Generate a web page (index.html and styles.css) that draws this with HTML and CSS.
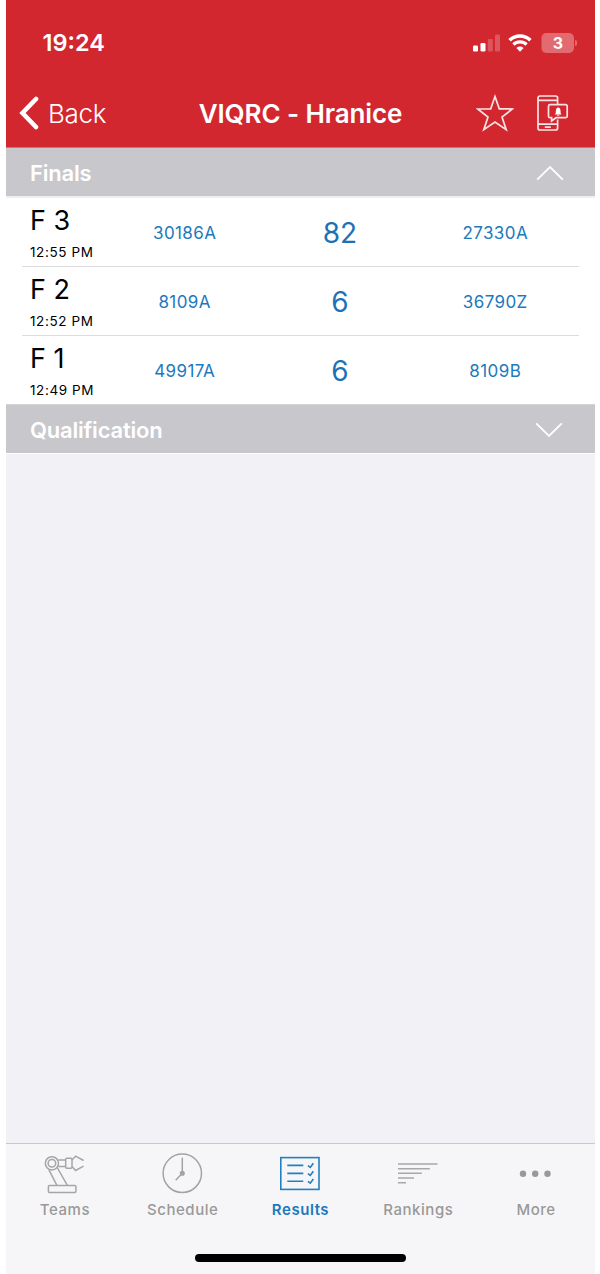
FILE: index.html
```html
<!DOCTYPE html>
<html lang="en">
<head>
  <meta charset="UTF-8">
  <title>VIQRC - Hranice</title>
  <meta name="viewport" content="width=device-width, initial-scale=1.0">
  <link rel="stylesheet" href="styles.css">
</head>
<body>
  <div class="screen">
    <header class="top">
      <div class="status-bar">
        <span class="time">19:24</span>
        <div class="status-icons">
          <svg class="signal" width="28" height="18" viewBox="0 0 28 18" fill="#fff">
            <rect x="0" y="11.5" width="5" height="6" rx="1.3"/>
            <rect x="7.5" y="9" width="5" height="8.5" rx="1.3"/>
            <rect x="14.8" y="5" width="5" height="12.5" rx="1.3" opacity=".22"/>
            <rect x="22" y="0.5" width="5" height="17" rx="1.3" opacity=".22"/>
          </svg>
          <svg class="wifi" width="24" height="18" viewBox="0 0 24 18">
            <path d="M1.600 6.200a14.800 14.800 0 0 1 20.800 0" fill="none" stroke="#fff" stroke-width="3.600"/>
            <path d="M5.400 10.500a9.500 9.500 0 0 1 13.200 0" fill="none" stroke="#fff" stroke-width="3.200"/>
            <path d="M12 17.800L8.400 14a5.200 5.200 0 0 1 7.200 0z" fill="#fff"/>
          </svg>
          <div class="battery">3</div>
          <div class="battery-tip"></div>
        </div>
      </div>
      <nav class="nav-bar">
        <a class="back">
          <svg width="20" height="34" viewBox="0 0 20 34"><path d="M17 3L3.500 17 17 31" fill="none" stroke="#fff" stroke-width="4.600" stroke-linecap="round" stroke-linejoin="miter"/></svg>
          <span class="back-text">Back</span>
        </a>
        <h1 class="title">VIQRC - Hranice</h1>
        <div class="actions">
          <svg width="38" height="38" viewBox="0 0 38 38"><path d="M19 2.500l4.300 12.300 13 .2-10.300 8.100 4.200 12.600L19 28.100 7.800 35.700l4.200-12.600L1.700 15l13-.2z" fill="none" stroke="#fbe3e4" stroke-width="1.700"/></svg>
          <svg class="phone" width="32" height="36" viewBox="0 0 32 36" fill="none" stroke="#fbe3e4" stroke-width="1.700">
            <path d="M20.600 9.500V3a2 2 0 0 0-2-2H3a2 2 0 0 0-2 2v30a2 2 0 0 0 2 2h15.600a2 2 0 0 0 2-2V24.500"/>
            <path d="M1 5.300h19.600M1 29.200h19.600M7.800 32.200h6"/>
            <path d="M13 9.700h15.700a1.500 1.500 0 0 1 1.500 1.500v10a1.500 1.500 0 0 1-1.500 1.500H19L14.600 26v-3.300H13a1.500 1.500 0 0 1-1.500-1.500v-10A1.500 1.500 0 0 1 13 9.700z"/>
            <path d="M17.600 19.600c1.200-1 1.200-1.800 1.200-3.200 0-2.200 1-3.800 2.400-3.800s2.400 1.600 2.400 3.800c0 1.400 0 2.200 1.200 3.200z" fill="#fff" stroke="none"/>
            <path d="M20 20.200h2.400" stroke-width="1"/>
          </svg>
        </div>
      </nav>
    </header>

    <main class="content">
      <div class="section">
        <span>Finals</span>
        <svg width="28" height="16" viewBox="0 0 28 16"><path d="M1.200 14.600L14 2l12.800 12.600" fill="none" stroke="#fff" stroke-width="1.800"/></svg>
      </div>
      <div class="matches">
        <div class="match">
          <div class="info"><span class="name">F 3</span><span class="hour">12:55 PM</span></div>
          <span class="team">30186A</span><span class="score">82</span><span class="team">27330A</span>
        </div>
        <div class="match">
          <div class="info"><span class="name">F 2</span><span class="hour">12:52 PM</span></div>
          <span class="team">8109A</span><span class="score">6</span><span class="team">36790Z</span>
        </div>
        <div class="match">
          <div class="info"><span class="name">F 1</span><span class="hour">12:49 PM</span></div>
          <span class="team">49917A</span><span class="score">6</span><span class="team">8109B</span>
        </div>
      </div>
      <div class="section closed">
        <span>Qualification</span>
        <svg width="28" height="16" viewBox="0 0 28 16"><path d="M1.200 1.400L14 14 26.800 1.400" fill="none" stroke="#fff" stroke-width="1.800"/></svg>
      </div>
    </main>

    <footer class="bottom">
      <nav class="tabs">
        <a class="tab">
          <svg width="42" height="42" viewBox="0 0 42 42" fill="none" stroke="#a6a6a6" stroke-width="1.500">
            <circle cx="7.900" cy="11.300" r="6.600"/>
            <circle cx="7.900" cy="11.300" r="3.800"/>
            <path d="M14.200 8.100h7.500M14.200 14.500h7.500"/>
            <rect x="21.700" y="6.300" width="6.300" height="10" rx="1"/>
            <path d="M28 8.100l3.600-4 8 4.400M28 14.500l3.600 4 8-4.400"/>
            <path d="M4.700 17.300L13 33.600M13.200 15.500l10.300 18.100"/>
            <rect x="4.400" y="33.600" width="27.500" height="7" rx="1"/>
          </svg>
          <span>Teams</span>
        </a>
        <a class="tab">
          <svg width="42" height="42" viewBox="0 0 42 42" fill="none" stroke="#a3a3a3" stroke-width="1.500">
            <circle cx="20.300" cy="21.300" r="19.200"/>
            <path d="M20.300 5.800v15.500l-6.600 7"/>
            <circle cx="20.300" cy="21.300" r="1.800" fill="#a3a3a3"/>
          </svg>
          <span>Schedule</span>
        </a>
        <a class="tab active">
          <svg width="42" height="42" viewBox="0 0 42 42" fill="none" stroke="#2380bf" stroke-width="1.600">
            <rect x="1.800" y="5.600" width="38.200" height="31.800"/>
            <path d="M8.300 13.400h16M8.300 21.400h16M8.300 29.200h16"/>
            <path d="M28.900 13.600l2.400 1.800 3-4.200M28.900 21.600l2.400 1.800 3-4.200M28.900 29.400l2.400 1.800 3-4.200"/>
          </svg>
          <span>Results</span>
        </a>
        <a class="tab">
          <svg width="42" height="42" viewBox="0 0 42 42" stroke="#a8a8a8" stroke-width="1.600">
            <path d="M1 12h39.500M1 16.700h31.800M1 21.300h23.800M1 26h16M1 30.700h8"/>
          </svg>
          <span>Rankings</span>
        </a>
        <a class="tab">
          <svg width="42" height="42" viewBox="0 0 42 42" fill="#999">
            <circle cx="8" cy="21.800" r="3.200"/><circle cx="20.200" cy="21.800" r="3.200"/><circle cx="32.500" cy="21.800" r="3.200"/>
          </svg>
          <span>More</span>
        </a>
      </nav>
      <div class="home-indicator"></div>
    </footer>
  </div>
</body>
</html>
```
FILE: styles.css
```css
* { box-sizing: border-box; }
body { margin: 0; background: #fff; font-family: Inter, "Liberation Sans", sans-serif; color: #000; }
.screen { width: 589px; height: 1274px; margin-left: 6px; display: flex; flex-direction: column; background: #f2f1f6; }

/* header */
.top { height: 148px; background: #d32730; color: #fff; border-bottom: 1px solid #dd6d74; }
.status-bar { height: 86px; padding: 0 18px 0 36.5px; display: flex; align-items: center; justify-content: space-between; }
.time { font-size: 23.5px; font-weight: 600; letter-spacing: 0; line-height: 28px; }
.status-icons { display: flex; align-items: center; }
.wifi { margin-left: 7px; }
.battery { width: 33px; height: 20px; margin-left: 9px; border-radius: 5px; background: #e16b71; border-left: 1px solid #ff3b30; font-size: 16px; font-weight: 700; line-height: 20px; text-align: center; }
.battery-tip { width: 2px; height: 6px; margin-left: 1px; border-radius: 0 3px 3px 0; background: #e16b71; }
.nav-bar { height: 54px; padding: 0 26px 0 13px; display: grid; grid-template-columns: 153px 1fr 140px; align-items: center; }
.back { display: flex; align-items: center; gap: 9px; }
.back-text { font-size: 26px; font-weight: 300; letter-spacing: -0.3px; }
.title { margin: 0; font-size: 26px; font-weight: 600; letter-spacing: -0.1px; text-align: center; white-space: nowrap; }
.actions { display: flex; align-items: center; justify-content: flex-end; gap: 23px; }

/* sections */
.content { flex: 1; }
.section { height: 48px; padding: 1px 31px 0 24px; display: flex; align-items: center; justify-content: space-between; background: #c8c7cc; color: #fff; font-size: 22px; font-weight: 600; letter-spacing: -0.2px; }
.closed { height: 50px; padding-right: 32px; padding-top: 2px; border-top: 1px solid #d3d2d6; border-bottom: 1px solid #fff; }
.matches { padding: 0 16px; border-top: 2px solid #efeff2; background: #fff; }
.match { height: 69px; padding-left: 8px; display: grid; grid-template-columns: 77px repeat(3, 155.3px); align-items: center; border-bottom: 1px solid #dcdcde; text-align: center; }
.match:last-child { border-bottom: none; height: 68px; }
.info { display: flex; flex-direction: column; padding-top: 5px; text-align: left; white-space: nowrap; }
.name { font-size: 27px; line-height: 34px; }
.hour { font-size: 13.5px; line-height: 28px; letter-spacing: 0.6px; }
.team { padding-top: 1px; font-size: 17px; letter-spacing: 0.4px; color: #1c79bc; }
.score { padding-top: 1px; font-size: 28px; color: #1c72b5; }

/* tab bar */
.bottom { height: 131px; background: #f6f6f8; border-top: 1px solid #c9c8cd; }
.tabs { display: flex; padding-top: 8px; }
.tab { flex: 1; display: flex; flex-direction: column; align-items: center; color: #999; font-size: 15px; font-weight: 500; line-height: 31px; letter-spacing: 0.55px; }
.active { color: #1c79bc; font-weight: 600; }
.home-indicator { width: 211px; height: 8px; margin: 29px auto 0; border-radius: 4px; background: #000; }
```
